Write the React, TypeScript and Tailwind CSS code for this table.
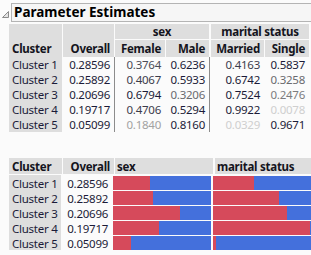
import React from 'react';

const ink = 'text-[#1b1b38]';

const rows = [
  { name: 'Cluster 1', overall: '0.28596', female: 0.3764, male: 0.6236, married: 0.4163, single: 0.5837 },
  { name: 'Cluster 2', overall: '0.25892', female: 0.4067, male: 0.5933, married: 0.6742, single: 0.3258 },
  { name: 'Cluster 3', overall: '0.20696', female: 0.6794, male: 0.3206, married: 0.7524, single: 0.2476 },
  { name: 'Cluster 4', overall: '0.19717', female: 0.4706, male: 0.5294, married: 0.9922, single: 0.0078 },
  { name: 'Cluster 5', overall: '0.05099', female: 0.184, male: 0.816, married: 0.0329, single: 0.9671 },
];

// faint values fade toward gray, like the report does
const tone = (v: number) => {
  if (v >= 0.5) return 'text-[#1b1b38]';
  if (v >= 0.4) return 'text-[#3c3c4c]';
  if (v >= 0.35) return 'text-[#4c4c56]';
  if (v >= 0.3) return 'text-[#6a6a6e]';
  if (v >= 0.2) return 'text-[#7c7c7e]';
  if (v >= 0.1) return 'text-[#a2a2a2]';
  return 'text-[#cfcfcf]';
};

const Head = ({ children, className = '' }: { children?: React.ReactNode; className?: string }) => (
  <div className={`bg-[#dedede] font-bold text-[#141420] ${className}`}>{children}</div>
);

const Bar = ({ value, width }: { value: number; width: string }) => (
  <div className={`flex h-[14px] ${width}`}>
    <div className="h-full bg-[#d64a5b]" style={{ width: `${value * 100}%` }} />
    <div className="h-full flex-1 bg-[#4470dc]" />
  </div>
);

export default function App() {
  return (
    <div className="w-[311px] h-[255px] overflow-hidden whitespace-nowrap bg-[#fbfbfb] text-[11.5px] leading-[15px] tracking-[-0.25px] font-['Noto_Sans',sans-serif]">
      {/* title */}
      <div className="flex items-start pt-[3px]">
        <svg width="11" height="19" viewBox="0 0 11 19" className="shrink-0">
          <path d="M8.5 8.5 L8.5 14.5 L2.5 14.5 Z" fill="#e4e4e4" stroke="#8a8a8a" strokeWidth="1" />
        </svg>
        <div className="h-[19px] flex-1 border border-r-0 border-[#b4b4b4] bg-[#f6f6f6] pl-[2px] text-[13.5px] leading-[17px] tracking-normal font-bold text-black">
          Parameter Estimates
        </div>
      </div>

      {/* estimates table */}
      <div className="ml-[9px] mt-[2px]">
        <div className="flex h-[33px]">
          <Head className="w-[53px] flex items-end pl-[3px] pb-[1px]">Cluster</Head>
          <div className="w-px" />
          <Head className="w-[51px] flex items-end justify-end pr-[4px] pb-[1px]">Overall</Head>
          <div className="w-px" />
          <div className="flex w-[94px] flex-col">
            <Head className="h-[15px] text-center">sex</Head>
            <div className="h-px" />
            <div className="flex flex-1">
              <Head className="w-[50px] pr-[4px] pt-[1px] text-right">Female</Head>
              <div className="w-px" />
              <Head className="flex-1 pr-[4px] pt-[1px] text-right">Male</Head>
            </div>
          </div>
          <div className="w-[2px]" />
          <div className="flex w-[98px] flex-col">
            <Head className="h-[15px] text-center">marital status</Head>
            <div className="h-px" />
            <div className="flex flex-1">
              <Head className="w-[53px] pr-[4px] pt-[1px] text-right">Married</Head>
              <div className="w-px" />
              <Head className="flex-1 pr-[4px] pt-[1px] text-right">Single</Head>
            </div>
          </div>
        </div>
        {rows.map((r) => (
          <div key={r.name} className={`flex h-[15px] ${ink}`}>
            <div className="w-[53px] bg-[#dedede] pl-[3px]">{r.name}</div>
            <div className="w-px" />
            <div className="w-[51px] pr-[4px] text-right">{r.overall}</div>
            <div className="w-px bg-[#8c8c8c]" />
            <div className={`w-[50px] pr-[4px] text-right ${tone(r.female)}`}>{r.female.toFixed(4)}</div>
            <div className="w-px" />
            <div className={`w-[43px] pr-[4px] text-right ${tone(r.male)}`}>{r.male.toFixed(4)}</div>
            <div className="w-px bg-[#8c8c8c]" />
            <div className="w-px" />
            <div className={`w-[53px] pr-[4px] text-right ${tone(r.married)}`}>{r.married.toFixed(4)}</div>
            <div className="w-px" />
            <div className={`w-[44px] pr-[4px] text-right ${tone(r.single)}`}>{r.single.toFixed(4)}</div>
          </div>
        ))}
      </div>

      {/* bar table */}
      <div className="ml-[9px] mt-[26px]">
        <div className="flex h-[16px]">
          <Head className="w-[53px] pl-[3px] pt-[1px]">Cluster</Head>
          <div className="w-px" />
          <Head className="w-[51px] pr-[4px] pt-[1px] text-right">Overall</Head>
          <div className="w-px" />
          <Head className="w-[98px] pl-[2px] pt-[1px]">sex</Head>
          <div className="w-[2px]" />
          <Head className="flex-1 pl-[2px] pt-[1px]">marital status</Head>
        </div>
        <div className="h-px" />
        {rows.map((r) => (
          <div key={r.name} className={`flex h-[15px] ${ink}`}>
            <div className="w-[53px] bg-[#dedede] pl-[3px] pt-px">{r.name}</div>
            <div className="w-px" />
            <div className="w-[51px] pr-[4px] pt-px text-right">{r.overall}</div>
            <div className="w-px" />
            <div className="pt-px">
              <Bar value={r.female} width="w-[98px]" />
            </div>
            <div className="w-[2px]" />
            <div className="pt-px">
              <Bar value={r.married} width="w-[98px]" />
            </div>
          </div>
        ))}
      </div>
    </div>
  );
}
